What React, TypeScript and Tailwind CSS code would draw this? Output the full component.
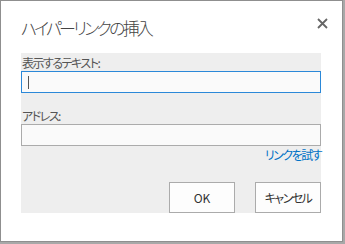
import React from "react";

const font = { fontFamily: '"Noto Sans CJK JP", "Noto Sans", sans-serif' };

export default function App() {
  return (
    <div className="w-[345px] h-[244px] bg-[#a8a8a8] overflow-hidden" style={font}>
      <div className="w-[343px] h-[242px] border border-[#8f8f8f] bg-white pl-5 flex flex-col [font-feature-settings:'palt']">
        <div className="flex justify-between items-start pt-[15px] pr-[14px]">
          <div className="text-[17px] leading-[24px] font-light text-[#444] tracking-[-2.8px]">
            ハイパーリンクの挿入
          </div>
          <svg width="11" height="11" viewBox="0 0 11 11" className="mt-[2px]">
            <path d="M1 1 L10 10 M10 1 L1 10" stroke="#666" strokeWidth="1.8" />
          </svg>
        </div>
        <div className="mt-[13px] w-[300px] h-[160px] bg-[#eeeeee] flex flex-col">
          <div className="pt-[2px] pl-[1px] text-[12px] leading-[16px] text-[#555] tracking-[-1.5px]">
            表示するテキスト:
          </div>
          <div className="h-[22px] border border-[#2b88d8] bg-[#fafafa] flex items-center pl-[6px]">
            <div className="w-px h-[13px] bg-[#555]" />
          </div>
          <div className="mt-[15px] pl-[1px] text-[12px] leading-[16px] text-[#555] tracking-[-1.5px]">
            アドレス:
          </div>
          <div className="h-[22px] border border-[#ababab] bg-[#fafafa]" />
          <div className="mt-[1px] text-right text-[12px] leading-[16px] text-[#0072c6] tracking-[-1.5px]">
            リンクを試す
          </div>
          <div className="mt-auto flex justify-end gap-5">
            <button className="w-[66px] h-[31px] border border-[#ababab] bg-[#fdfdfd] text-[12px] text-[#333]">
              OK
            </button>
            <button className="w-[66px] h-[31px] border border-[#ababab] bg-[#fdfdfd] text-[12px] text-[#333] tracking-[-1.5px]">
              キャンセル
            </button>
          </div>
        </div>
      </div>
    </div>
  );
}
